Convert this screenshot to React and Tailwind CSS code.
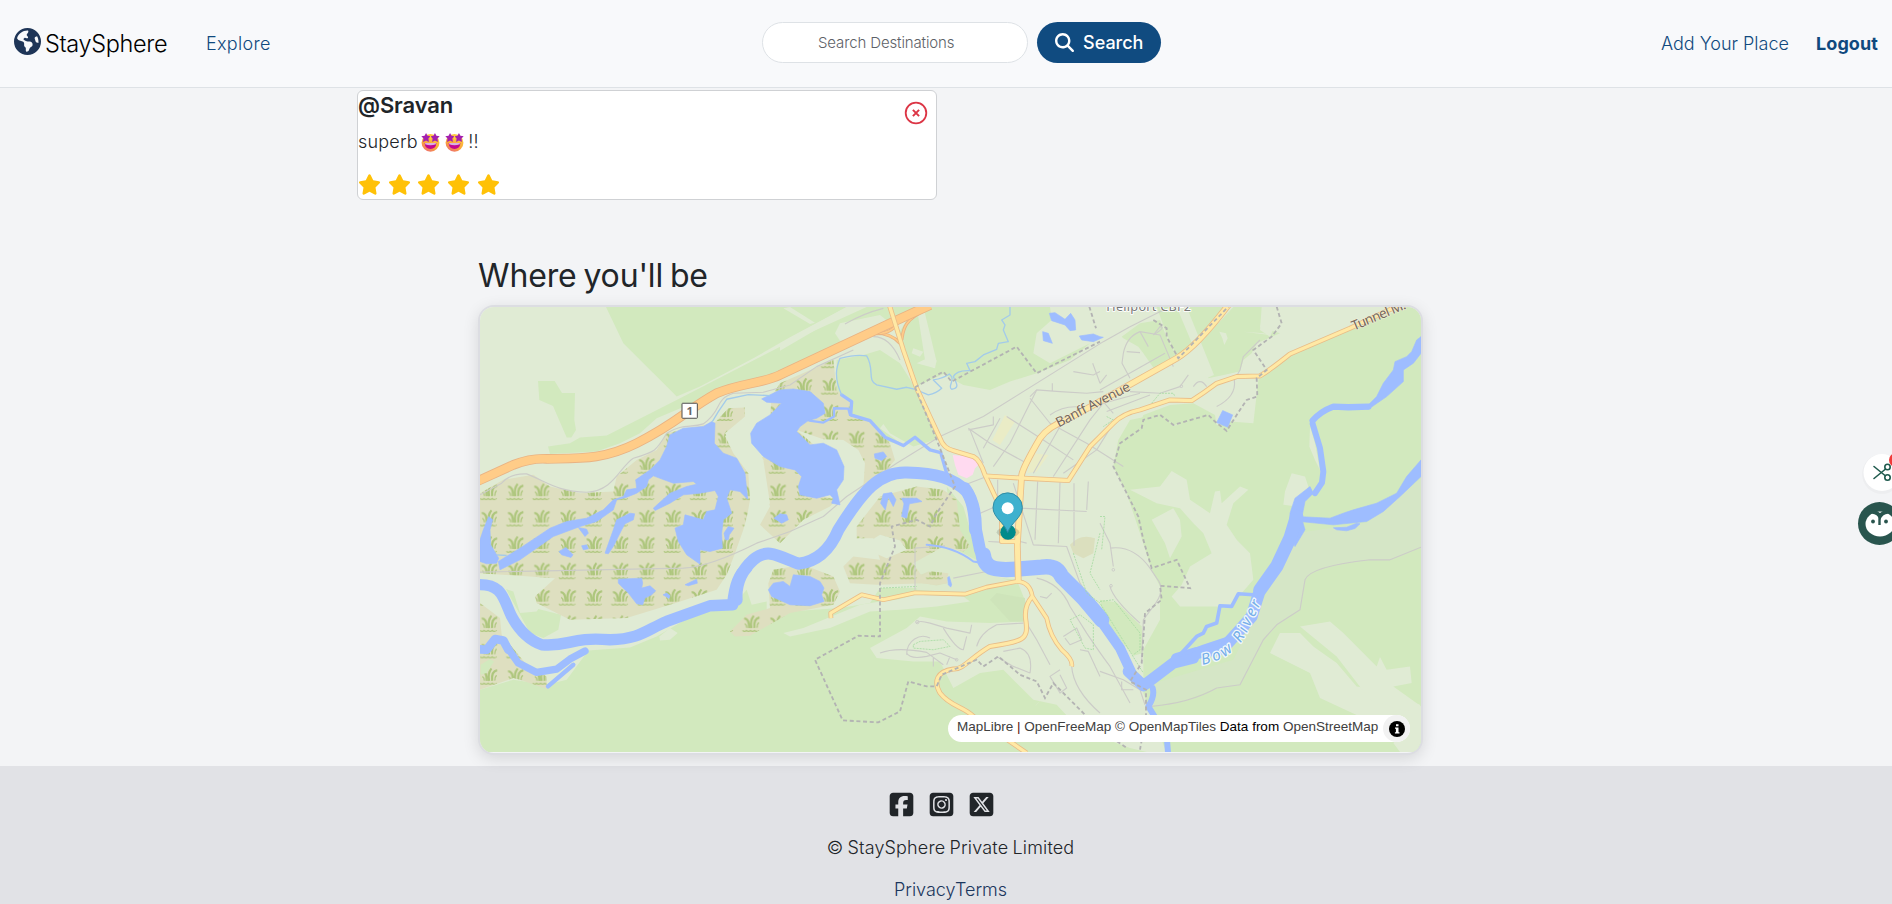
import React from "react";
import {
  FaEarthAmericas,
  FaMagnifyingGlass,
  FaSquareFacebook,
  FaSquareInstagram,
  FaSquareXTwitter,
  FaStar,
} from "react-icons/fa6";

const WOOD = "#d2e9be";
const LIGHT = "#e0ebd4";
const WETLAND = "#dedfc0";
const WATER = "#9ebdff";

const woods = [
  "M408 21L460 130L620 290L690 260L850 175L960 112L1130 21Z",
  "M234 440L300 430L330 413L410 407L620 300L960 125L1190 21L1400 21L1240 80L930 215L890 230L760 265L690 300L560 355L510 400L450 430L380 455L240 462Z",
  "M204 243H254L276 279H315L313 360L318 390L304 413H290L249 318L208 300Z",
  "M1310 60L1380 21H1740L1745 60L1700 100L1690 160L1740 190L1860 130L1800 180L1700 220L1620 245L1560 270L1480 255L1420 222L1335 262L1300 170L1280 110Z",
  "M1100 180L1180 165L1230 150L1290 190L1340 270L1410 415L1330 440L1260 400L1240 372L1230 385L1300 435L1230 420L1190 365L1140 340L1140 310L1100 270Z",
  "M1955 110L2010 70L2070 60L2085 100L2120 170L2055 210L2020 160L2005 140L1960 115Z",
  "M2060 21H2125L2135 40L2170 125L2125 180L2085 90Z",
  "M2145 21H2270L2200 110L2170 125Z",
  "M2290 21H2385L2370 80L2430 100L2360 130L2345 160L2320 180L2310 215L2215 235L2180 140Z",
  "M2020 345L2100 315L2170 310L2235 345L2205 365L2110 375L2075 348L2015 358Z",
  "M2030 350L2075 345L2110 378L2235 345L2240 375L2280 365L2350 370L2365 240L2400 210L2460 165L2640 90L2860 0V1360H2090L2020 1180L2020 1050L2070 960L2070 860L2045 810L2010 700L1970 580L1930 500L1945 420L1980 360Z",
  "M30 1170L130 1140L230 1155L290 1140L355 1052L480 1043L560 1010L680 940L780 928L830 870L845 915L890 905L890 940L1110 925L1200 910L1230 865L1340 865V745H1380L1510 790L1550 830L1640 840L1668 910L1668 965L1560 970L1430 965L1350 950L1310 985L1200 1045L1220 1075L1330 1085L1410 1085L1450 1165L1530 1120L1600 1110L1690 1200L1760 1215L1830 1290L1980 1345L2030 1357H30Z",
  "M108 868L130 875L150 940L200 935L205 928L273 945L265 990L220 1015L180 1000Z",
  "M1430 560L1480 620L1500 690L1530 790L1460 760L1470 700L1440 640Z",
  "M1890 900L1940 908L2015 980L2020 1060L1990 1068L1900 960Z",
];

const clearings = [
  "M930 130L1130 21H1155L930 152Z M960 21L1035 68L1020 72L940 25Z",
  "M1340 20H1360L1400 185L1390 205L1365 180Z M1365 178L1400 180L1395 205L1340 190Z M1330 145L1360 155L1350 170L1325 160Z",
  "M1095 100L1110 70L1230 45L1280 85L1200 120L1110 122Z",
  "M2120 21L2210 235L2232 225L2150 21Z",
  "M2248 95L2268 100L2273 115L2263 135L2257 115Z M2320 95L2400 105L2380 100Z",
  "M2210 240L2310 215L2300 300L2260 325L2232 330Z M2360 285L2330 300L2300 340L2345 368L2355 300Z",
  "M2375 21H2440L2400 110L2370 90Z",
  "M2070 560L2105 513L2150 540L2160 600L2220 640L2235 575L2250 573L2255 610L2310 560L2335 570L2290 610L2270 675L2300 720L2340 760L2350 840L2280 920L2130 920L2105 890L2135 855L2160 800L2225 760L2200 700L2170 670L2130 625L2060 610L1980 570Z",
  "M2045 660L2110 625L2130 660L2135 710L2100 775L2085 730Z",
  "M2445 575L2465 520L2505 530L2515 560L2480 620L2440 615Z M2520 380L2535 430L2550 510L2535 480L2518 440Z",
  "M2400 1060L2430 1000L2490 1000L2530 1040L2600 1090L2660 1160L2720 1170L2850 1215V1290L2700 1265L2550 1195L2520 1120Z",
  "M2490 980L2580 965L2620 1000L2720 1100L2730 1072L2750 1110L2820 1100L2825 1150L2770 1160L2853 1220V1250L2700 1200L2600 1070Z",
  "M2853 1230V1357H2790L2770 1330L2810 1290L2720 1240Z",
  "M940 1000L1000 985L1170 915L1230 905L1280 900L1340 885L1480 890L1500 905L1400 920L1290 930L1200 935L1080 985L960 1010Z",
  "M568 1010L600 985L623 1000L600 1020L570 1022Z M1695 1220L1725 1185L1700 1215Z",
];

const wetlands = [
  "M30 580L100 540L190 525L240 560L330 580L430 575L440 530L500 480L560 450L590 400L735 368L775 325L825 323L825 350L765 400L790 440L820 470L840 520L845 600L820 690L795 760L770 825L740 870L600 915L470 955L300 960L270 945L200 910L195 890L255 835L30 820Z",
  "M905 290L930 250L1090 180L1100 270L1140 310V340L1200 360L1260 430L1275 480L1250 510L1170 560L1120 560L1100 470L930 500L860 475L890 470Z",
  "M860 478L930 490L1120 450L1120 580L1080 620L1000 660L930 730L870 675L900 620Z",
  "M1160 680L1230 590L1340 560L1420 570L1460 600L1470 690L1500 740L1480 755L1420 740L1330 790L1370 850L1220 855L1140 850L1120 800L1150 770L1230 780L1210 715L1160 715Z",
  "M780 995L830 945L900 925L895 850L910 810L1000 795L1090 830L1110 875L1090 915L960 940L840 1008L795 1010Z",
  "M30 910L90 955L95 1005L170 1095L230 1130V1168L150 1140L130 1135L30 1170Z",
  "M1355 830L1385 815L1435 820L1430 850L1395 855L1355 850Z",
];

const openings = [
  "M765 408L860 360L900 345L850 420L880 480L900 610L870 640L825 685L840 600L835 520L790 460Z",
  "M980 390L1060 418L1120 420L1165 450L1185 490L1180 560L1110 600L1060 590L1100 500L1050 450Z",
  "M1190 730L1230 705L1290 722L1310 750L1250 775L1215 760Z",
];

const waters = [
  "M600 405L640 385L700 380L725 365L735 370L733 430L760 460L800 475L825 520L833 598L810 575L780 570L770 595L785 640L760 660L755 700L757 745L720 755L690 750L690 793L650 765L625 725L615 685L640 675L645 645L700 660L710 635L735 630L745 590L735 572L690 580L640 585L600 610L555 632L550 625L600 580L650 560L680 553L670 545L610 550L550 528L535 540L530 560L500 580L470 592L440 600L430 630L380 665L330 680L250 710L150 780L90 810L85 785L150 745L240 685L290 665L350 655L400 630L430 600L460 590L470 570L500 565L497 540L540 510L570 480L590 440Z",
  "M875 297L930 270L970 267L1020 275L1060 310L1065 340L1040 355L1015 362L990 380L980 395L1005 420L1020 435L1060 430L1100 450L1122 500L1120 540L1100 570L1110 615L1085 610L1090 595L1080 585L1040 595L990 585L985 560L995 530L975 510L930 500L880 470L845 430L842 400L860 370L900 345L935 310L890 307Z",
  "M56 650L68 660L60 690L62 735L86 775L80 790L50 792L30 785V720L40 690Z",
  "M405 760L430 690L440 660L480 640L494 642L490 660L465 672L455 690L430 740L415 762Z",
  "M445 838L515 835L518 850L515 865L540 858L557 873L545 885L525 895L518 915L500 912L475 880L445 850Z",
  "M267 755L288 743L309 765L303 773L275 765Z M325 683L350 688L355 700L345 710Z M335 738L350 735L355 747L340 750Z M579 885L590 880L600 888L597 896Z M645 855L680 838L682 850L655 858Z",
  "M766 720L762 700L775 680L792 685L778 705L775 720Z M912 655L930 642L950 645L955 660L935 670Z",
  "M895 870L910 850L940 845L960 860L970 825L1020 830L1050 845L1062 865L1055 885L1062 905L1020 918L960 915L905 890Z",
  "M1213 462L1240 456L1250 470L1235 482L1215 475Z",
  "M1232 610L1240 582L1265 578L1278 600L1270 620L1255 592L1246 630Z M1295 595L1340 595L1356 605L1318 612L1310 655L1295 650L1302 612Z",
  "M1738 40L1755 38L1785 58L1802 40L1815 60L1817 90L1800 92L1785 75L1745 62Z M1718 95L1735 100L1747 130L1720 122Z M1828 108L1870 102L1890 110L1900 112L1870 125L1835 120Z",
  "M2258 332L2288 345L2273 382L2240 368Z",
  "M2590 684L2630 682L2660 670L2670 672L2655 686L2630 693L2600 690Z",
  "M1433 833L1438 830L1445 855L1442 862L1435 855Z",
  "M2853 110V160L2830 190L2800 210L2800 245L2750 290L2695 328L2685 325L2720 290L2740 250L2770 210L2775 185L2810 170L2825 155L2840 120Z",
  "M2853 480V530L2790 590L2740 635L2690 665L2590 675L2490 665L2480 650L2580 655L2620 640L2650 630L2720 610L2780 580L2810 530Z",
  "M2458 690L2460 640L2475 595L2520 560L2530 580L2505 605L2495 655L2505 690L2475 740Z",
];

const rivers = [
  ["M20 855C100 850 100 900 125 950Q160 1015 215 1035C300 1042 300 1010 420 1020C510 1018 530 990 590 965L720 918L788 915Q795 830 830 805", 34],
  ["M800 900Q795 830 850 780C890 745 920 765 985 792C1040 785 1080 750 1105 690C1180 570 1230 515 1310 518C1400 520 1450 535 1490 575Q1515 615 1515 690", 36],
  ["M1485 565Q1518 610 1518 690L1530 750L1548 795L1600 812", 36],
  ["M1540 765C1545 810 1580 812 1640 808L1715 802Q1760 795 1775 830L1840 895L1895 960", 46],
  ["M1880 945L1950 1045L1985 1120", 30],
  ["M1975 1115L2020 1158L2110 1090L2170 1075", 34],
  ["M2120 1078L2180 1060L2260 1045L2310 990L2345 950L2370 870", 36],
  ["M2370 870L2420 800L2460 715L2480 650", 40],
  ["M2535 580L2556 548L2560 515L2550 445L2528 372", 18],
  ["M2528 362Q2550 335 2590 320L2635 322L2695 320", 19],
  ["M20 1048L50 1050L75 1018L100 1022L115 1050", 26],
  ["M110 1040L145 1090L200 1118L260 1108L300 1078L345 1054", 22],
  ["M234 1160L310 1095", 13],
  ["M2048 1165Q2055 1190 2035 1220L2090 1310L2095 1370", 18],
  ["M2130 1065L2180 1010L2200 1000L2210 980L2240 970L2250 918L2285 920L2305 882L2350 885", 11],
  ["M2150 1060L2200 1040L2290 1010L2330 990", 11],
  ["M1115 285L1145 305L1142 345L1200 362L1245 412L1300 437L1335 412L1380 450L1412 458L1430 520L1450 560", 10],
  ["M1018 362L1060 368L1092 350L1092 325L1135 326L1140 345", 7],
  ["M1370 735Q1450 740 1510 785L1540 790", 6],
];

const creeks = [
  "M1115 285C1090 230 1100 200 1110 175Q1160 162 1190 168C1215 210 1190 240 1220 255L1280 268L1310 262L1335 268L1375 285Q1400 280 1415 265L1390 240Q1420 235 1438 222C1460 240 1430 260 1445 268C1470 265 1460 250 1450 230Q1460 210 1500 212L1490 190L1515 185L1540 165L1580 148L1585 130L1615 125L1600 90L1605 75L1595 60L1620 45V20",
  "M727 365L745 335L770 298L835 284L900 287",
  "M80 765L110 767",
];

const motorways = [
  ["M20 545L130 495Q185 474 230 477C330 475 400 480 500 430C620 370 650 330 740 280C810 250 880 250 930 225L1260 70L1380 15", 24],
];
const ramps = ["M1200 100Q1260 95 1290 130", "M1210 100Q1270 105 1285 60L1330 35", "M1370 28C1300 60 1300 90 1295 120", "M1200 95Q1270 50 1340 40"];

const secondary = [
  ["M1258 15L1300 150L1340 265L1410 415Q1420 445 1450 452L1510 470Q1530 480 1545 525L1580 600L1595 640V725H1645", 10],
  ["M1645 850L1642 735L1655 525Q1660 500 1710 415Q1735 380 1790 360L1960 265L2120 175Q2180 140 2275 15", 15],
  ["M1545 528L1660 535L1795 542L1860 440L1930 370Q1960 340 2010 330L2100 300L2165 302Q2200 280 2240 250L2300 230L2370 228Q2400 210 2460 162L2640 85L2800 10", 10],
  ["M1083 955L1082 940L1175 885L1240 900L1335 879L1485 883L1550 862L1640 845Q1680 845 1687 890L1730 955Q1740 1010 1775 1050Q1810 1080 1805 1100", 9],
  ["M1687 890Q1660 920 1668 965C1675 1020 1660 1025 1560 1040C1500 1075 1480 1110 1450 1108C1400 1115 1390 1145 1410 1180C1440 1220 1480 1220 1510 1250L1670 1360", 10],
];

const minorRoads = [
  "M30 585L95 550Q120 520 170 522C230 545 260 575 350 577C430 575 450 500 490 475C560 455 560 450 590 400C640 370 660 385 700 372C760 330 730 300 790 280L880 277L960 255L1040 200L1150 150",
  "M30 817L640 805Q720 800 860 730L960 695L1060 650L1130 590L1280 490L1410 410L1540 350L1900 125L1980 80L2080 30",
  "M1125 72Q1180 40 1240 25M1210 110Q1260 110 1290 180",
  "M1680 295L1740 370L1850 430L1960 500M1700 270L1660 350L1620 430L1570 500M1495 385L1560 430L1670 490M1500 390L1540 490M1570 350V375L1495 390M1610 350L1720 420L1810 480M1750 530L1860 360L1900 310M1930 370L1880 450L1780 520M1690 520L1770 380M1540 445L1590 355",
  "M1480 557L1550 530M1583 540V590M1520 645L1600 610M1703 545L1695 720M1770 548L1765 730M1812 550V738M1855 545L1850 630M1650 625L1850 635M1740 345Q1790 310 1850 325M1680 290L1700 270L1770 275L1850 280L1900 275M1747 250V275M1810 215L1870 225L1890 215M1868 190L1890 250",
  "M1960 160L1956 190L1980 235M1960 160Q1970 110 2010 95L2070 105L2110 200M1970 155L2010 158M2010 95L2035 140M1890 270L2085 160M1890 250L1910 225M2050 105L2070 80Q2090 80 2050 105M1980 275L2070 280L2130 260L2155 225M2170 260Q2190 230 2210 260M1895 300L1930 340M1900 310L2010 280M1910 335L2040 285",
  "M2240 320Q2300 290 2293 240L2310 210L2320 170L2370 120",
  "M1630 550L1690 735L1790 740L1830 850L1880 930M1670 730L1650 725M1555 725L1590 727M1335 745V870M1335 745L1425 738M1450 835L1550 815L1600 810M1700 835Q1770 850 1800 920L1850 1000Q1890 1060 1920 1100L1980 1210",
  "M1340 970Q1345 960 1380 970L1430 985L1500 1000L1505 975M1420 985Q1460 1050 1480 1050L1490 1010M1230 1060Q1280 1040 1370 1058L1420 1095M1310 1065C1310 1020 1350 1000 1380 1015M1520 1040Q1530 1000 1580 975L1660 970M1310 1060Q1320 1080 1370 1070L1410 1060L1460 1080M1390 1075V1100M1440 1070L1430 1095M1580 1070L1630 1100L1680 1120M1600 1055L1650 1045Q1690 1060 1680 1120M1660 955L1700 1020L1740 1095",
  "M1710 890L1730 895L1745 880M1780 1010L1820 985L1835 1020L1800 1035L1785 1015M1805 1100Q1810 1170 1890 1240M1830 1050L1855 1055L1890 1130M1770 1110L1740 1130L1770 1180L1790 1165L1770 1125",
  "M1890 670L1920 730L1930 800M1920 745Q1990 735 2040 805L2060 835Q2090 870 2050 920L2020 960L2015 1090M1920 860Q1930 900 2010 970",
  "M1890 1115L1960 1140L2010 1170L2025 1215M1955 1145V1170L1990 1170M2045 1220Q2160 1210 2240 1165L2310 1155L2380 1020L2420 975L2490 930L2505 840Q2520 800 2700 780L2760 780L2853 742",
];

const borders = [
  "M1335 262L1420 215L1445 245L1640 140L1700 220L1890 125",
  "M1335 262L1400 420L1455 560L1400 640L1380 680L1340 660L1265 680L1275 740L1230 850V1010L1165 1008L1035 1080L1118 1262L1225 1268L1290 1235L1315 1145L1370 1160L1400 1160L1415 1125L1520 1080L1540 1100L1585 1070L1650 1125L1700 1145L1725 1195L1750 1150L1890 1290L1970 1345",
  "M1858 20L1878 85M2050 60L2090 85V110L2125 175L2275 20",
  "M2420 20L2435 70L2405 110L2350 150L2390 210L2360 235L2362 290L2330 300L2300 345L2270 393L2235 365L2215 345L2110 375L2070 345L2020 360L2015 385L1950 430L1930 500L1970 580L2005 650L2020 720L2045 805L2120 780L2160 865L2070 858L2075 900L2025 940L2015 1090L1980 1145L2028 1170L2028 1250L2010 1350",
];

const paths = [
  "M2045 310L2070 280L2110 280L2115 290M1910 350L1930 360L1900 380M1890 650L1905 650L1895 750",
  "M1230 865L1340 860M1330 1035L1350 1025L1420 1020L1440 1040L1390 1050L1330 1045Z M1800 960L1830 945L1870 975V1050L1845 1045Z",
  "M1810 760L1830 820L1850 880L1890 910L2020 1120M1890 700L1860 820L1890 870M1890 905L1930 900L2010 1000L2010 1050L1990 1065",
];

function Road({ d, w, fill, casing }) {
  return (
    <>
      <path d={d} fill="none" stroke={casing} strokeWidth={w + 5} strokeLinejoin="round" />
      <path d={d} fill="none" stroke={fill} strokeWidth={w} strokeLinejoin="round" />
    </>
  );
}

function MapDrawing() {
  return (
    <svg className="block h-[445px] w-full" viewBox="30 21 2823 1336" preserveAspectRatio="none" aria-label="Map of Banff">
      <defs>
        <pattern id="reeds" x="16.5" y="548" width="78.7" height="79.2" patternUnits="userSpaceOnUse">
          <g fill="none" stroke="#adc67c" strokeLinecap="butt">
            <path d="M19 12Q34 12 34 41M41 41Q36 18 48 4M50 41Q47 12 65 9" strokeWidth="6.5" />
            <path d="M27 40Q27 32 21 28M58 40Q57 30 63 24" strokeWidth="4" />
            <path d="M14 48q6 6 12 0q6 6 12 0q6 6 12 0q6 6 14 0" strokeWidth="3.5" />
          </g>
        </pattern>
        <path id="river-label" d="M2197 1095Q2300 1075 2337 985L2400 855" />
      </defs>
      <rect x="30" y="21" width="2823" height="1336" fill={LIGHT} />
      {woods.map((d) => <path key={d} d={d} fill={WOOD} />)}
      <path d="M2853 535V742L2760 780L2700 780Q2520 800 2505 840L2490 930L2420 975L2380 1020L2310 1155L2240 1165L2150 1200L2045 1220L2055 1150L2290 1080L2380 900L2480 700L2690 668Z" fill="#d5e6c6" />
      {clearings.map((d) => <path key={d} d={d} fill={LIGHT} />)}
      <path d="M1340 748L1440 740L1540 790L1555 820L1640 850L1590 860L1480 880L1340 870Z" fill="#dce9cc" />
      <path d="M1345 828L1375 815L1430 820L1432 850L1400 857L1360 850Z M1800 735Q1830 700 1875 715L1870 760L1840 775L1810 760Z" fill="#dbdfbe" />
      <path d="M1560 900L1580 880L1665 895L1668 965L1620 965Z" fill="#cee4ba" />
      {wetlands.map((d) => (
        <g key={d}>
          <path d={d} fill={WETLAND} />
          <path d={d} fill="url(#reeds)" />
        </g>
      ))}
      {openings.map((d) => <path key={d} d={d} fill={LIGHT} />)}
      <path d="M32 1095L60 1078L72 1085L50 1120L32 1125Z" fill={WOOD} />
      <path d="M1605 345L1635 365L1590 435L1567 420Z M1690 460L1735 465L1700 515L1672 520Z" fill="#eaecc6" />
      <path d="M1448 465L1520 472L1528 492L1515 505L1508 525L1490 535L1465 525L1455 495Z" fill="#ffdaf0" />
      {minorRoads.map((d) => <path key={d} d={d} fill="none" stroke="#ccccc8" strokeWidth="3.4" strokeLinejoin="round" />)}
      <g fill="none" stroke="#ccccc8" strokeWidth="3">
        <circle cx="1342" cy="967" r="5" />
        <circle cx="1930" cy="810" r="4" /><circle cx="1923" cy="858" r="4" />
        <circle cx="2134" cy="259" r="4" /><circle cx="1460" cy="1080" r="4" />
      </g>
      {waters.map((d) => <path key={d} d={d} fill={WATER} stroke={WATER} strokeWidth="2" strokeLinejoin="round" />)}
      {rivers.map(([d, w]) => <path key={d} d={d} fill="none" stroke={WATER} strokeWidth={w} strokeLinejoin="round" strokeLinecap="round" />)}
      {creeks.map((d) => <path key={d} d={d} fill="none" stroke="#a3cbea" strokeWidth="4" strokeLinejoin="round" />)}
      {paths.map((d) => <path key={d} d={d} fill="none" stroke="#a5dba0" strokeWidth="2.4" strokeDasharray="6 3" />)}
      {ramps.map((d) => <Road key={d} d={d} w={5} fill="#ffcc88" casing="#e9b383" />)}
      {motorways.map(([d, w]) => <Road key={d} d={d} w={w} fill="#ffcc88" casing="#e9b383" />)}
      {secondary.map(([d, w]) => <path key={d} d={d} fill="none" stroke="#e9bd88" strokeWidth={w + 5} strokeLinejoin="round" />)}
      {secondary.map(([d, w]) => <path key={d} d={d} fill="none" stroke="#ffe9a5" strokeWidth={w} strokeLinejoin="round" />)}
      {borders.map((d) => <path key={d} d={d} fill="none" stroke="#b3b3b3" strokeWidth="5.5" strokeDasharray="12 8" />)}

      <rect x="636" y="310" width="46" height="45" rx="2" fill="#fff" stroke="#4d4d4d" strokeWidth="3" />
      <text x="659" y="345" textAnchor="middle" fontSize="34" fontWeight="700" fill="#666" fontFamily="Noto Sans, sans-serif">1</text>
      <g fontFamily="Noto Sans, sans-serif" fill="#76675a" stroke="#f3efd9" strokeWidth="3" paintOrder="stroke">
        <text transform="translate(1766 383) rotate(-27.5)" fontSize="41" textLength="246">Banff Avenue</text>
        <text transform="translate(2652 92) rotate(-23)" fontSize="41" textLength="172">Tunnel M.</text>
      </g>
      <text x="1909" y="33" fontSize="38" textLength="254" fill="#777" stroke="#fff" strokeWidth="5" paintOrder="stroke" fontFamily="Noto Sans, sans-serif">Heliport CBF2</text>
      <text fontSize="46" fontStyle="italic" fontFamily="Noto Sans, sans-serif" fill="#74aee9" stroke="#f0f7fb" strokeWidth="8" strokeLinejoin="round" paintOrder="stroke" letterSpacing="9">
        <textPath href="#river-label">Bow River</textPath>
      </text>

      <ellipse cx="1614" cy="697" rx="34" ry="16" fill="#000" opacity="0.13" />
      <circle cx="1614" cy="697" r="23" fill="#008b8b" />
      <path d="M1613 698C1603 668 1569 653 1569 623A44 44 0 0 1 1657 623C1657 653 1623 668 1613 698Z" fill="#3fb1ce" stroke="#318da6" strokeWidth="3" />
      <circle cx="1613" cy="625" r="18" fill="#fff" />
    </svg>
  );
}

function StarStruck() {
  return (
    <svg className="h-[19px] w-[19px]" viewBox="0 0 32 32" role="img" aria-label="star-struck">
      <defs>
        <linearGradient id="face" x1="0.7" y1="0" x2="0.2" y2="1">
          <stop offset="0" stopColor="#ffcf3f" />
          <stop offset="0.6" stopColor="#f9a63a" />
          <stop offset="1" stopColor="#ee6a76" />
        </linearGradient>
      </defs>
      <circle cx="16" cy="16.5" r="15" fill="url(#face)" />
      <path d="M8.500 0l2.500 4.800 5 .7-3.600 3.900.9 5.600-4.800-2.500-5.100 2.500.9-5.600L.5 5.500l5.500-.7zM23.500 0l2.500 4.800 5.500.7-3.800 3.900.9 5.600-5.100-2.500-4.800 2.500.9-5.600L16 5.500l5-.7z" fill="#a31fae" />
      <path d="M15 5h2v6h-2z" fill="#ffcf3f" />
      <path d="M6 17h20q-1 10-10 10T6 17z" fill="#c4068f" />
      <path d="M7 17h18v2q-9 3-18 0z" fill="#d9b0e2" />
    </svg>
  );
}

function Header() {
  return (
    <header className="flex h-[88px] items-center border-b border-[#dee2e6] bg-[#f8f9fb] pl-[14px] pr-[14px]">
      <div className="flex flex-1 items-center text-[#10497e]">
        <FaEarthAmericas className="-mt-[5px] size-[27px] text-[#1e3557]" />
        <span className="ml-[4px] w-[125px] whitespace-nowrap text-[23.500px] font-[350] tracking-[-0.35px] text-black">StaySphere</span>
        <a className="ml-[36px] text-lg font-light tracking-[0.3px]">Explore</a>
      </div>
      <form className="-mt-[3px] ml-[31px] flex items-center gap-[9px]">
        <div className="flex h-[41px] w-[266px] items-center rounded-full border border-[#dee2e6] bg-white pl-[55px] pt-[2px] text-[15px] font-light tracking-[-0.130px] text-[#5d6167]">
          Search Destinations
        </div>
        <div className="flex h-[41px] w-[124px] items-center gap-[9px] rounded-full bg-[#104b80] pl-[18px] text-lg font-medium text-white">
          <FaMagnifyingGlass className="size-[19px]" />
          <span className="pt-[2px]">Search</span>
        </div>
      </form>
      <nav className="flex flex-1 items-center justify-end gap-[27px] text-lg text-[#10497e]">
        <a className="font-light">Add Your Place</a>
        <a className="font-bold tracking-[0.1px]">Logout</a>
      </nav>
    </header>
  );
}

function Review() {
  return (
    <article className="ml-[357px] mt-[2px] flex h-[110px] w-[580px] justify-between rounded-md border border-[#cfd1d4] bg-white">
      <div className="flex flex-col">
        <h3 className="mt-[1px] h-[26px] text-[22px] font-semibold leading-[26px] tracking-[-0.1px]">@Sravan</h3>
        <p className="mt-[12px] flex h-[24px] items-center text-lg font-light leading-6">
          <span className="tracking-[0.2px]">superb</span>
          <span className="ml-[3px] mr-[4px] flex gap-[5.500px]"><StarStruck /><StarStruck /></span>
          <span>!!</span>
        </p>
        <div className="mt-[19px] flex gap-[6.700px] text-[#ffc107]">
          {[1, 2, 3, 4, 5].map((n) => <FaStar key={n} className="h-[23px] w-[23px]" />)}
        </div>
      </div>
      <svg className="mr-[8px] mt-[10px] size-6" viewBox="0 0 24 24" fill="none" stroke="#dc3545">
        <circle cx="12" cy="12" r="10.300" strokeWidth="1.800" />
        <path d="M8.900 8.900l6.200 6.200M15.100 8.900l-6.200 6.200" strokeWidth="2" />
      </svg>
    </article>
  );
}

function MapSection() {
  return (
    <section className="ml-[478px] mt-[54px] w-[945px]">
      <h2 className="h-[51px] text-[32px] font-normal leading-[44px] tracking-[-0.150px] [word-spacing:-2px]">Where you'll be</h2>
      <div className="relative h-[450px] overflow-hidden rounded-2xl border-2 border-[#dcdde2] bg-[#f3f4f6] shadow-[0_4px_16px_rgba(0,0,0,0.12)]">
        <MapDrawing />
        <div className="absolute bottom-[11px] right-[11px] flex h-[27px] w-[462px] items-center justify-between rounded-full bg-white pl-[9px] font-['Liberation_Sans',sans-serif] text-[13.500px] text-[#404040]">
          <span className="-mt-[3px] whitespace-nowrap">
            MapLibre <span className="text-[#601010]">|</span> OpenFreeMap © OpenMapTiles <span className="text-black">Data from</span> OpenStreetMap
          </span>
          <span className="flex size-[27px] items-center justify-center rounded-full bg-[#f2f2f2]">
            <svg className="size-4" viewBox="0 0 16 16">
              <circle cx="8" cy="8" r="8" fill="#000" />
              <path d="M7 3.200h2.500v2H7zM6 6.400h3.500v4.800h1v1.300H5.900v-1.300h1V7.700H6z" fill="#fff" />
            </svg>
          </span>
        </div>
      </div>
    </section>
  );
}

function Footer() {
  return (
    <footer className="mt-[11px] flex h-[138px] flex-col items-center bg-[#e1e2e6] text-[#212529]">
      <div className="mr-[10px] mt-[25px] flex gap-[13px]">
        <FaSquareFacebook className="size-[27px]" />
        <FaSquareInstagram className="size-[27px]" />
        <FaSquareXTwitter className="size-[27px]" />
      </div>
      <p className="mr-[-9px] mt-[16px] h-[28px] text-lg font-light leading-7 tracking-[0.160px] [word-spacing:-1px]">© StaySphere Private Limited</p>
      <p className="mr-[-9px] mt-[14px] h-[28px] text-lg font-light leading-7 text-[#1b365d]"><a>Privacy</a><a>Terms</a></p>
    </footer>
  );
}

function FloatingTools() {
  return (
    <aside className="absolute right-0 top-[445px] h-[105px] w-[42px] overflow-hidden">
      <svg width="42" height="105" viewBox="0 0 42 105" fill="none">
        <circle cx="32" cy="29" r="20" fill="#000" opacity="0.025" />
        <circle cx="32" cy="27.500" r="18.500" fill="#fff" />
        <g stroke="#1f5a4d" strokeWidth="1.600" strokeLinecap="round">
          <path d="M24 21.500l11 9M24 33.500l11-9" />
          <circle cx="37.500" cy="22" r="2.700" />
          <circle cx="37.500" cy="32.500" r="2.700" />
        </g>
        <circle cx="46" cy="15" r="7" fill="#f03a3a" />
        <circle cx="29.500" cy="78.500" r="21.500" fill="#29554e" />
        <ellipse cx="30" cy="79" rx="14.500" ry="12.500" fill="#fff" />
        <path d="M16 71q9-6 14 4q5-10 14-4q-6-9-14-3q-8-6-14 3z" fill="#29554e" />
        <circle cx="23" cy="76.500" r="1.900" fill="#29554e" />
        <circle cx="36" cy="76.500" r="1.900" fill="#29554e" />
        <path d="M29.500 71v9" stroke="#29554e" strokeWidth="2.400" />
      </svg>
    </aside>
  );
}

export default function App() {
  return (
    <div className="relative h-[904px] overflow-hidden bg-[#f3f4f6] font-['Inter',sans-serif] text-[#212529]">
      <Header />
      <Review />
      <MapSection />
      <Footer />
      <FloatingTools />
    </div>
  );
}
